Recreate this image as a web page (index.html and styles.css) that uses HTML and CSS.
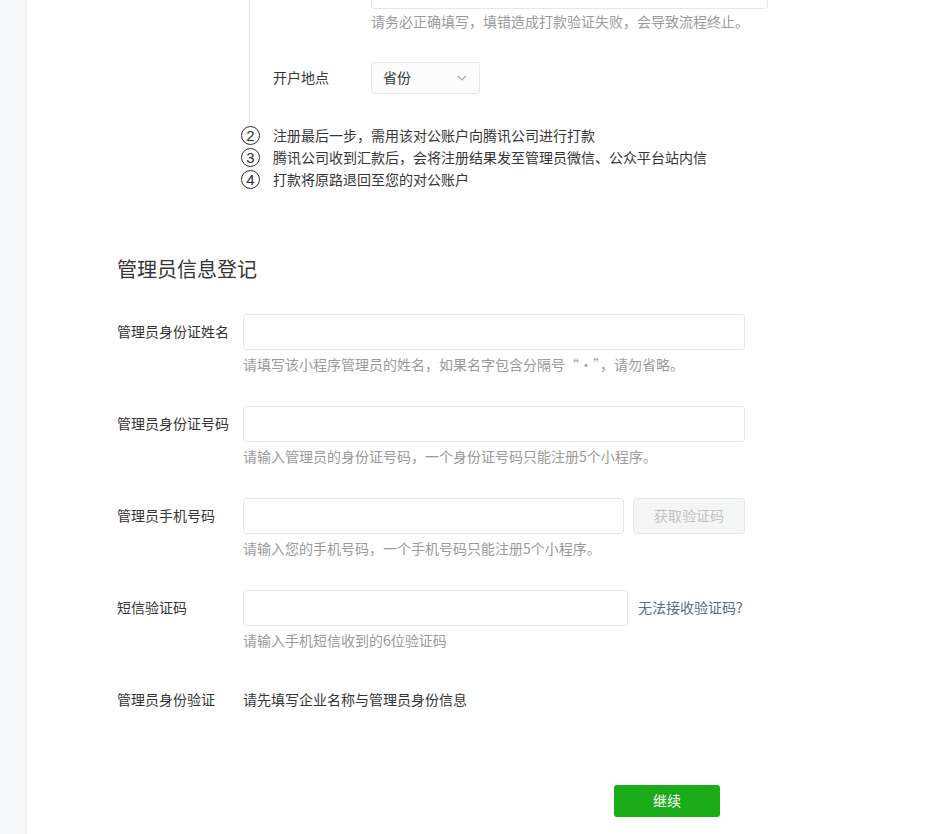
FILE: index.html
```html
<!DOCTYPE html>
<html lang="zh-CN">
<head>
<meta charset="utf-8">
<title>管理员信息登记</title>
<link rel="stylesheet" href="styles.css">
</head>
<body>
<div class="page">
  <aside class="sidebar"></aside>
  <main class="main">
    <section class="steps">
      <div class="step step-first">
        <div class="rail"></div>
        <div class="step-body">
          <div class="bank-row">
            <span class="bank-label"></span>
            <input class="input input-bank" type="text">
          </div>
          <p class="hint hint-bank">请务必正确填写，填错造成打款验证失败，会导致流程终止。</p>
          <div class="bank-row select-row">
            <span class="bank-label">开户地点</span>
            <div class="select">
              <span>省份</span>
              <svg class="chevron" width="10" height="6" viewBox="0 0 10 6"><path d="M1 1 L5 5 L9 1" fill="none" stroke="#a8a8a8" stroke-width="1.2"/></svg>
            </div>
          </div>
        </div>
      </div>
      <div class="step"><span class="num">2</span><span class="step-text">注册最后一步，需用该对公账户向腾讯公司进行打款</span></div>
      <div class="step"><span class="num">3</span><span class="step-text">腾讯公司收到汇款后，会将注册结果发至管理员微信、公众平台站内信</span></div>
      <div class="step"><span class="num">4</span><span class="step-text">打款将原路退回至您的对公账户</span></div>
    </section>

    <section class="admin">
      <h2 class="title">管理员信息登记</h2>

      <div class="field">
        <label class="field-label">管理员身份证姓名</label>
        <div class="field-body">
          <input class="input input-wide" type="text">
          <p class="hint">请填写该小程序管理员的姓名，如果名字包含分隔号“·”，请勿省略。</p>
        </div>
      </div>

      <div class="field">
        <label class="field-label">管理员身份证号码</label>
        <div class="field-body">
          <input class="input input-wide" type="text">
          <p class="hint">请输入管理员的身份证号码，一个身份证号码只能注册5个小程序。</p>
        </div>
      </div>

      <div class="field">
        <label class="field-label">管理员手机号码</label>
        <div class="field-body">
          <div class="inline">
            <input class="input input-phone" type="text">
            <button class="btn-code" type="button">获取验证码</button>
          </div>
          <p class="hint">请输入您的手机号码，一个手机号码只能注册5个小程序。</p>
        </div>
      </div>

      <div class="field">
        <label class="field-label">短信验证码</label>
        <div class="field-body">
          <div class="inline">
            <input class="input input-sms" type="text">
            <a class="link" href="#">无法接收验证码?</a>
          </div>
          <p class="hint">请输入手机短信收到的6位验证码</p>
        </div>
      </div>

      <div class="field">
        <label class="field-label">管理员身份验证</label>
        <div class="field-body">
          <div class="plain">请先填写企业名称与管理员身份信息</div>
        </div>
      </div>

      <div class="actions">
        <button class="btn-primary" type="button">继续</button>
      </div>
    </section>
  </main>
</div>
</body>
</html>
```

FILE: styles.css
```css
* { box-sizing: border-box; }
html, body {
  margin: 0;
  padding: 0;
  background: #fff;
  overflow: hidden;
}
body {
  font-family: "Noto Sans CJK SC", "Liberation Sans", sans-serif;
  font-size: 14px;
  color: #353535;
}
.page {
  display: flex;
  min-height: 834px;
}
.sidebar {
  width: 27px;
  flex: none;
  background: #f6f7f9;
  border-right: 1px solid #eceef1;
}
.main {
  flex: 1;
}

/* steps */
.steps {
  margin-top: -27px;
  margin-left: 214px;
}
.step {
  display: flex;
  align-items: center;
  height: 22px;
}
.step-first {
  align-items: stretch;
  height: auto;
}
.rail {
  width: 18px;
  flex: none;
  display: flex;
  justify-content: center;
}
.rail::after {
  content: "";
  width: 1px;
  margin-left: -1px;
  background: #e4e4e4;
}
.step-body {
  margin-left: 14px;
  padding-bottom: 30px;
}
.bank-row {
  display: flex;
  align-items: center;
}
.bank-label {
  width: 98px;
  flex: none;
  line-height: 30px;
  padding-bottom: 2px;
}
.input {
  display: block;
  height: 36px;
  border: 1px solid #e7e7eb;
  border-radius: 3px;
  background: #fff;
  padding: 0 10px;
  font: inherit;
  outline: none;
}
.input-bank { width: 397px; }
.hint {
  margin: 4px 0 0;
  line-height: 20px;
  color: #9a9a9a;
}
.hint-bank {
  margin: 2px 0 0 98px;
}
.select-row {
  margin-top: 31px;
}
.select {
  width: 109px;
  height: 32px;
  border: 1px solid #e7e7eb;
  border-radius: 3px;
  background: #fcfcfc;
  display: flex;
  align-items: center;
  justify-content: space-between;
  padding: 0 12px 2px 11px;
  color: #353535;
}
.chevron { display: block; margin-top: 2px; }
.num {
  width: 19px;
  height: 19px;
  flex: none;
  border: 1px solid #2f2f2f;
  border-radius: 50%;
  font-family: "Liberation Sans", sans-serif;
  font-size: 15px;
  line-height: 17px;
  text-align: center;
  color: #2f2f2f;
}
.step-text {
  margin-left: 13px;
  line-height: 22px;
  padding-bottom: 1px;
}

/* admin */
.admin {
  padding-left: 90px;
}
.title {
  margin: 66px 0 30px;
  font-size: 20px;
  font-weight: normal;
  line-height: 26px;
  padding-bottom: 2px;
  color: #353535;
}
.field {
  display: flex;
  margin-bottom: 30px;
}
.field-body { padding-bottom: 2px; }
.field-label {
  width: 126px;
  flex: none;
  line-height: 34px;
  height: 36px;
  color: #353535;
}
.input-wide { width: 502px; }
.inline {
  display: flex;
  align-items: center;
}
.input-phone { width: 381px; }
.input-sms { width: 385px; }
.btn-code {
  margin-left: 9px;
  width: 112px;
  height: 36px;
  border: 1px solid #e4e8eb;
  border-radius: 3px;
  background: #f4f5f5;
  color: #c3c3c3;
  font: inherit;
  line-height: 32px;
  padding: 0 0 2px;
}
.link,
.link:visited {
  margin-left: 10px;
  margin-bottom: 2px;
  color: #576b95;
  text-decoration: none;
}
.plain {
  line-height: 34px;
  height: 36px;
  color: #353535;
}
.actions {
  padding-top: 35px;
  padding-left: 497px;
}
.btn-primary {
  width: 106px;
  height: 32px;
  border: none;
  border-radius: 3px;
  background: #1aad19;
  color: #fff;
  font: inherit;
  padding: 0 0 2px;
}
```
